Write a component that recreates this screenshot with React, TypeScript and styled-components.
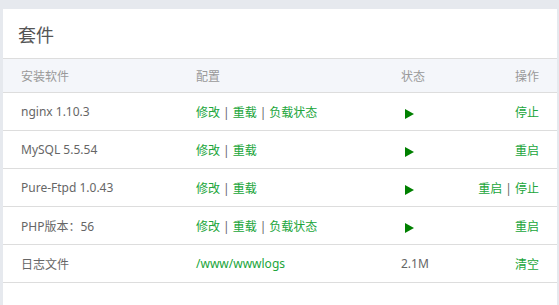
import React from 'react';
import styled, { createGlobalStyle } from 'styled-components';

const GlobalStyle = createGlobalStyle`
  html, body {
    margin: 0;
    padding: 0;
    background: #e6e9ee;
    font-family: "Noto Sans", "Noto Sans CJK SC", sans-serif;
    font-size: 12px;
    color: #666;
  }
`;

const Page = styled.div`
  padding: 9px 2px 0 3px;
  height: 305px;
  box-sizing: border-box;
`;

const Panel = styled.div`
  background: #fff;
  height: 100%;
`;

const Title = styled.div`
  height: 50px;
  line-height: 52px;
  padding-left: 15px;
  font-size: 18px;
  color: #555;
  border-bottom: 1px solid #ddd;
  box-sizing: border-box;
`;

const Table = styled.table`
  width: 100%;
  border-collapse: collapse;
`;

const Th = styled.th<{ $align?: string }>`
  height: 33px;
  padding: 0 18px 0 18px;
  background: #f4f6fa;
  font-weight: normal;
  color: #999;
  text-align: ${p => p.$align || 'left'};
  border-bottom: 1px solid #ddd;
`;

const Td = styled.td<{ $align?: string }>`
  height: 37px;
  padding: 0 18px 0 18px;
  text-align: ${p => p.$align || 'left'};
  border-bottom: 1px solid #ddd;
  color: #666;
`;

const Link = styled.a`
  color: #20a53a;
  text-decoration: none;
  cursor: pointer;
`;

const Sep = styled.span`
  color: #666;
  margin: 0 3px;
`;

const Play = styled.svg`
  display: inline-block;
  vertical-align: middle;
  margin: 3px 0 0 4px;
`;

const PlayIcon = () => (
  <Play width="9" height="10" viewBox="0 0 9 10">
    <polygon points="0,0 9,5 0,10" fill="#008000" />
  </Play>
);

const Links = ({ items }: { items: string[] }) => (
  <>
    {items.map((t, i) => (
      <React.Fragment key={t}>
        {i > 0 && <Sep>|</Sep>}
        <Link>{t}</Link>
      </React.Fragment>
    ))}
  </>
);

const rows = [
  { name: 'nginx 1.10.3', conf: ['修改', '重载', '负载状态'], ops: ['停止'] },
  { name: 'MySQL 5.5.54', conf: ['修改', '重载'], ops: ['重启'] },
  { name: 'Pure-Ftpd 1.0.43', conf: ['修改', '重载'], ops: ['重启', '停止'] },
  { name: 'PHP版本：56', conf: ['修改', '重载', '负载状态'], ops: ['重启'] },
];

export default function App() {
  return (
    <>
      <GlobalStyle />
      <Page>
        <Panel>
          <Title>套件</Title>
          <Table>
            <colgroup>
              <col style={{ width: 175 }} />
              <col style={{ width: 205 }} />
              <col style={{ width: 70 }} />
              <col />
            </colgroup>
            <thead>
              <tr>
                <Th>安装软件</Th>
                <Th>配置</Th>
                <Th>状态</Th>
                <Th $align="right">操作</Th>
              </tr>
            </thead>
            <tbody>
              {rows.map(r => (
                <tr key={r.name}>
                  <Td>{r.name}</Td>
                  <Td><Links items={r.conf} /></Td>
                  <Td><PlayIcon /></Td>
                  <Td $align="right"><Links items={r.ops} /></Td>
                </tr>
              ))}
              <tr>
                <Td>日志文件</Td>
                <Td><Link>/www/wwwlogs</Link></Td>
                <Td>2.1M</Td>
                <Td $align="right"><Link>清空</Link></Td>
              </tr>
            </tbody>
          </Table>
        </Panel>
      </Page>
    </>
  );
}
